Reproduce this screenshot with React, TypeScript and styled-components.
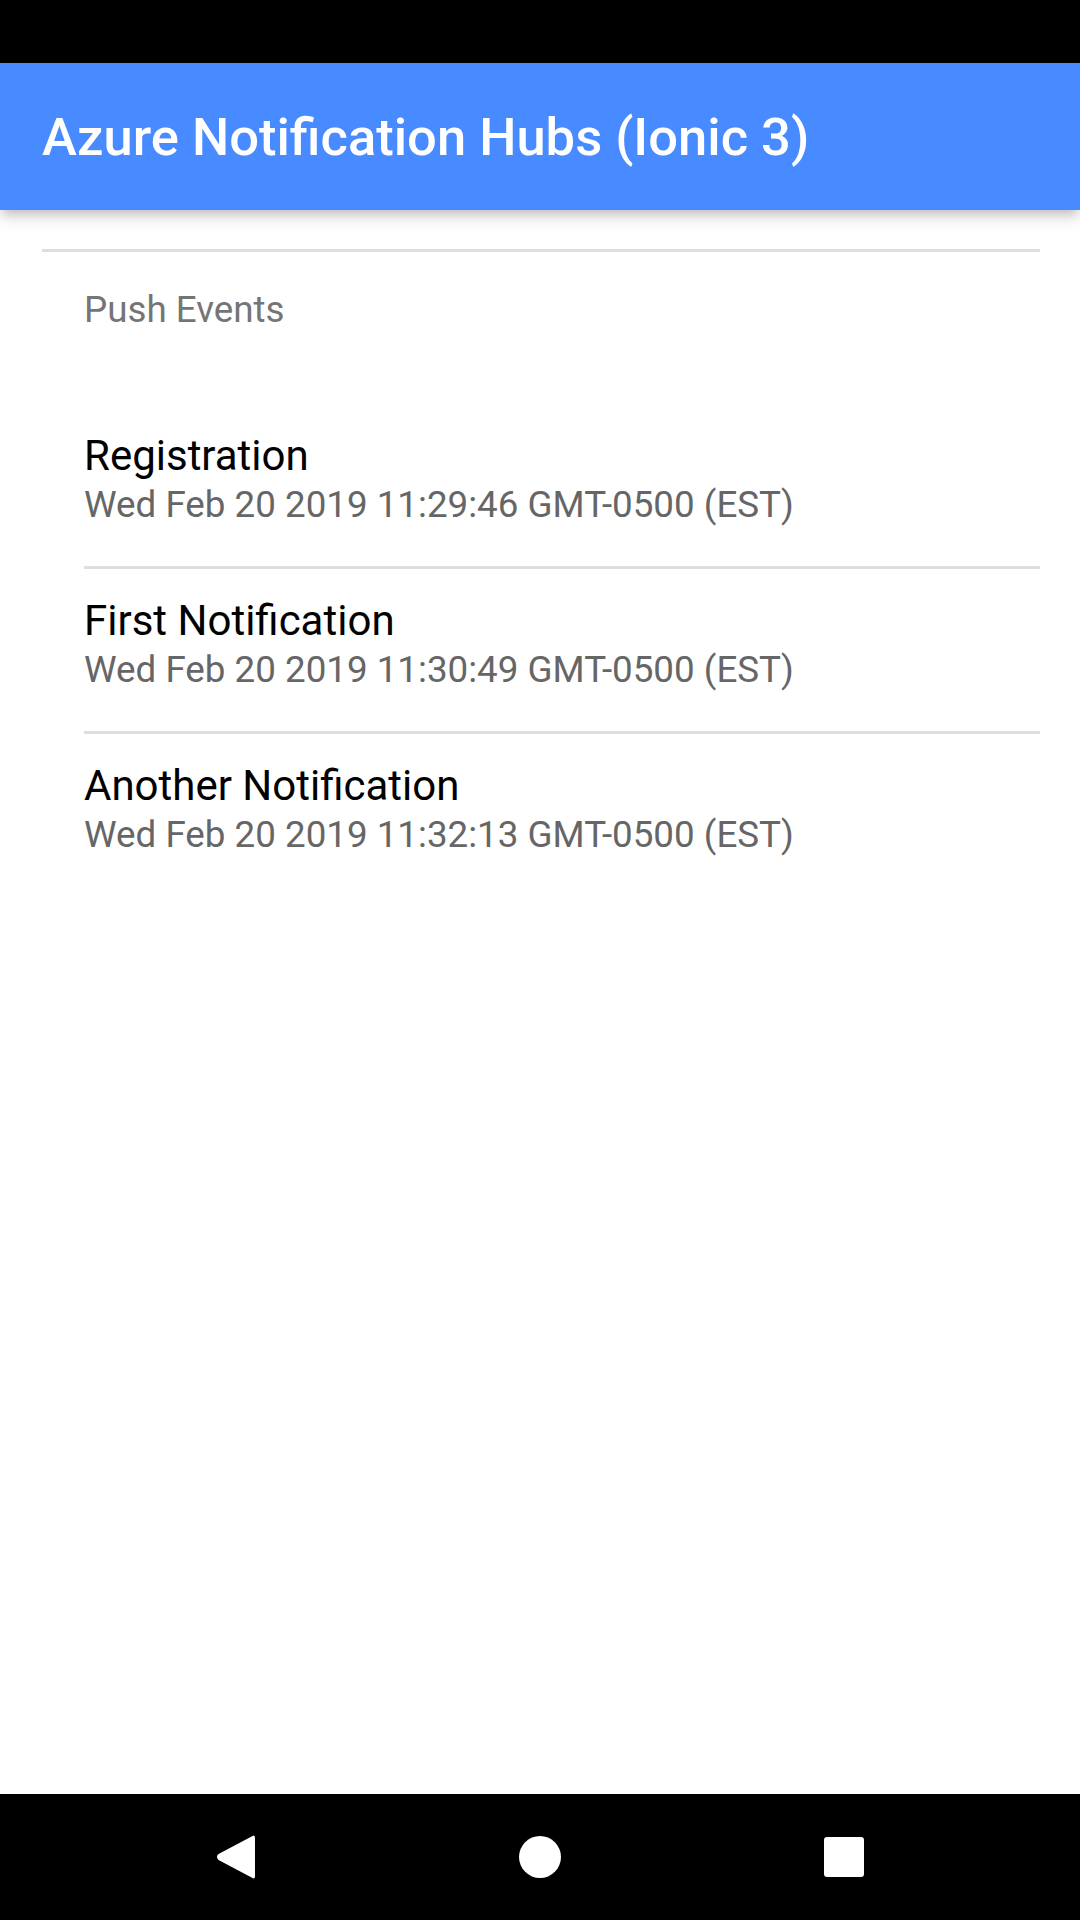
import styled, { createGlobalStyle } from 'styled-components';

const GlobalStyle = createGlobalStyle`
    html, body {
        margin: 0;
        padding: 0;
        background: #fff;
    }
    body {
        font-family: Roboto, 'Noto Sans', 'Liberation Sans', sans-serif;
        -webkit-font-smoothing: antialiased;
    }
    * {
        box-sizing: border-box;
    }
`;

const Screen = styled.div`
    width: 1080px;
    height: 1920px;
    display: flex;
    flex-direction: column;
    overflow: hidden;
    background: #fff;
`;

const StatusBar = styled.div`
    height: 63px;
    flex-shrink: 0;
    background: #000;
`;

const Toolbar = styled.header`
    height: 147px;
    flex-shrink: 0;
    display: flex;
    align-items: center;
    padding: 0 42px;
    background-color: #488aff;
    box-shadow: 0 5px 10px -3px rgba(0, 0, 0, 0.2), 0 10px 13px 0 rgba(0, 0, 0, 0.1);
    position: relative;
    z-index: 1;
`;

const Title = styled.h1`
    margin: 0;
    color: #fff;
    font-size: 52.5px;
    font-weight: 500;
    letter-spacing: 0;
`;

const Content = styled.main`
    flex: 1;
    padding: 39px 40px 0 42px;
`;

const ListHeader = styled.div`
    height: 118px;
    border-top: 3px solid #dedede;
    display: flex;
    align-items: center;
    padding-left: 42px;
    margin-bottom: 37px;
    color: #757575;
    font-size: 36.75px;
`;

const EventList = styled.ul`
    list-style: none;
    margin: 0;
    padding: 0 0 0 42px;
`;

const EventItem = styled.li<{ $last?: boolean }>`
    padding: 27px 0 ${(p) => (p.$last ? 41 : 38)}px;
    border-bottom: ${(p) => (p.$last ? 'none' : '3px solid #dedede')};
`;

const EventName = styled.h2`
    margin: 0;
    font-size: 42px;
    font-weight: 400;
    line-height: 50px;
    color: #000;
`;

const EventDate = styled.p`
    margin: 0;
    font-size: 36.75px;
    line-height: 47px;
    color: #666;
`;

const NavBar = styled.nav`
    height: 126px;
    flex-shrink: 0;
    background: #000;
    display: grid;
    grid-template-columns: 236px 304px 304px;
    align-items: center;
    padding: 0;
`;

const NavButton = styled.div`
    display: flex;
    justify-content: flex-end;
    width: 100%;
    svg {
        display: block;
        transform: translateX(50%);
    }
`;

interface IEvent {
    name: string;
    date: string;
}

const events: IEvent[] = [
    { name: 'Registration', date: 'Wed Feb 20 2019 11:29:46 GMT-0500 (EST)' },
    { name: 'First Notification', date: 'Wed Feb 20 2019 11:30:49 GMT-0500 (EST)' },
    { name: 'Another Notification', date: 'Wed Feb 20 2019 11:32:13 GMT-0500 (EST)' },
];

function App() {
    return (
        <Screen>
            <GlobalStyle />
            <StatusBar />
            <Toolbar>
                <Title>Azure Notification Hubs (Ionic 3)</Title>
            </Toolbar>
            <Content>
                <ListHeader>Push Events</ListHeader>
                <EventList>
                    {events.map((ev, i) => (
                        <EventItem key={ev.name} $last={i === events.length - 1}>
                            <EventName>{ev.name}</EventName>
                            <EventDate>{ev.date}</EventDate>
                        </EventItem>
                    ))}
                </EventList>
            </Content>
            <NavBar>
                <NavButton>
                    <svg width="40" height="44" viewBox="0 0 40 44">
                        <path
                            d="M37 2 Q38 1 38 3 L38 41 Q38 43 37 42 L3 24 Q1 22 3 20 Z"
                            fill="#fff"
                            stroke="#fff"
                            strokeWidth="2"
                            strokeLinejoin="round"
                        />
                    </svg>
                </NavButton>
                <NavButton>
                    <svg width="42" height="42" viewBox="0 0 42 42">
                        <circle cx="21" cy="21" r="21" fill="#fff" />
                    </svg>
                </NavButton>
                <NavButton>
                    <svg width="40" height="40" viewBox="0 0 40 40">
                        <rect x="0" y="0" width="40" height="40" rx="3" fill="#fff" />
                    </svg>
                </NavButton>
            </NavBar>
        </Screen>
    );
}

export default App;
